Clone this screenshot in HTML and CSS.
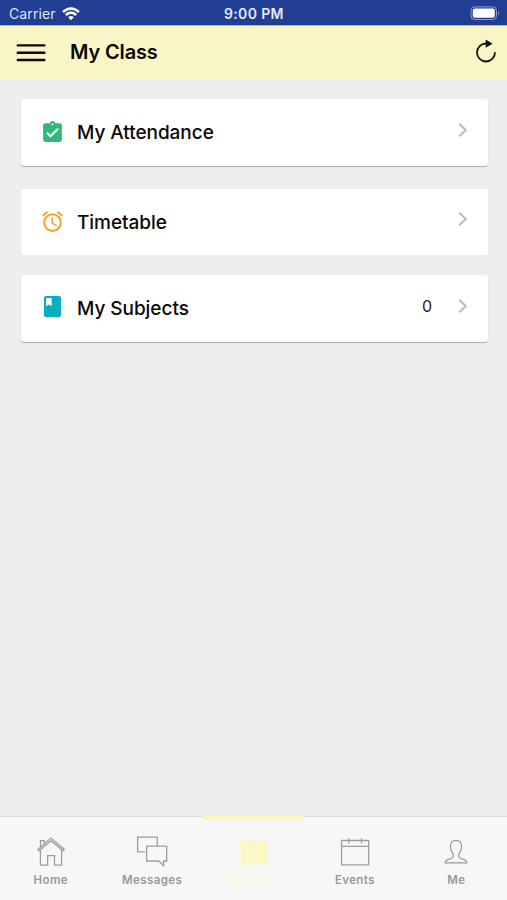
FILE: index.html
```html
<!DOCTYPE html>
<html lang="en">
<head>
<meta charset="utf-8">
<title>My Class</title>
<link rel="stylesheet" href="styles.css">
</head>
<body>
<div class="status">
  <span class="carrier">Carrier</span>
  <svg class="wifi" width="18" height="14" viewBox="0 0 18 14" fill="none" stroke="#fff" stroke-width="2.5"><path d="M1 5Q9-2 17 5M3.8 8Q9 3.3 14.2 8"/><path d="M6.2 10.2Q9 7.8 11.8 10.2L9 13.2Z" fill="#fff" stroke="none"/></svg>
  <span class="time">9:00 PM</span>
  <svg class="battery" width="31" height="15" viewBox="0 0 31 15"><rect x="1" y=".9" width="25.5" height="12.6" rx="3.6" fill="none" stroke="#8f9dcd"/><rect x="2.8" y="2.6" width="22" height="9.2" rx="2" fill="#fff"/><path d="M28 5q2 2.2 0 4.4z" fill="#8f9dcd"/></svg>
</div>
<header class="header">
  <svg class="menu" width="30" height="20" viewBox="0 0 30 20" stroke="#0c0b08" stroke-width="2.4" stroke-linecap="round"><path d="M1.8 2.4h26.6M1.8 9.7h26.6M1.8 17h26.6"/></svg>
  <h1>My Class</h1>
  <svg class="refresh" width="22" height="24" viewBox="0 0 22 24" fill="none" stroke="#15140f" stroke-width="1.8"><path d="M11.2 4.5A9 9 0 1 0 20 13.2"/><path d="M10.7.5l6.8 4.2-6.8 4.1z" fill="#0c0b08" stroke="none"/></svg>
</header>
<main class="list">
  <section class="card raised">
    <svg class="icon" width="24" height="24" viewBox="0 0 24 24" fill="#2fb87b"><path fill-rule="evenodd" d="M19 3h-4.2a3 3 0 0 0-5.6 0H5a2 2 0 0 0-2 2v14a2 2 0 0 0 2 2h14a2 2 0 0 0 2-2V5a2 2 0 0 0-2-2zm-7 0a1 1 0 1 1 0 2 1 1 0 0 1 0-2zm-2 14l-4-4 1.4-1.4L10 14.2l6.6-6.6L18 9z"/></svg>
    <span class="label">My Attendance</span>
    <svg class="chevron" width="10" height="16" viewBox="0 0 10 16"><path d="M1.3 1.7L7.7 8l-6.4 6.3"/></svg>
  </section>
  <section class="card">
    <svg class="icon" width="24" height="24" viewBox="0 0 24 24" fill="#f8a32b"><path d="M22 5.7l-4.6-3.9-1.3 1.5 4.6 3.9zM7.9 3.4L6.6 1.9 2 5.7l1.3 1.5zM12.5 8H11v6l4.7 2.9.8-1.3-4-2.3zM12 4a9 9 0 1 0 0 18 9 9 0 0 0 0-18zm0 16a7 7 0 1 1 0-14 7 7 0 0 1 0 14z"/></svg>
    <span class="label timetable">Timetable</span>
    <svg class="chevron" width="10" height="16" viewBox="0 0 10 16"><path d="M1.3 1.7L7.7 8l-6.4 6.3"/></svg>
  </section>
  <section class="card raised">
    <svg class="icon book" width="24" height="24" viewBox="0 0 24 24" fill="#06adc3"><path fill-rule="evenodd" d="M18.2 1.8H5.8a2 2 0 0 0-2 2v16.4a2 2 0 0 0 2 2h12.4a2 2 0 0 0 2-2V3.8a2 2 0 0 0-2-2zM5.8 3.8h5.4v8l-2.7-1.7-2.7 1.7z"/></svg>
    <span class="label">My Subjects</span>
    <span class="count">0</span>
    <svg class="chevron" width="10" height="16" viewBox="0 0 10 16"><path d="M1.3 1.7L7.7 8l-6.4 6.3"/></svg>
  </section>
</main>
<nav class="tabs">
  <a class="tab">
    <svg width="34" height="34" viewBox="0 0 34 34"><path d="M3.8 15.4L17 4.1l13.2 11.3-1.2 1.4L17 6.7 5 16.8zM6.4 15.8v15.3h7.2V21.7h6.9v9.4h7.1V15.8M6.5 13V6.7h3.7v3.1"/></svg>
    <span>Home</span>
  </a>
  <a class="tab">
    <svg width="34" height="34" viewBox="0 0 34 34"><path d="M10.3 17.9H2.6V3.1h19.7v8.7M11.7 12.2h20V27h-3.1v4.6L23.9 27H11.7z"/></svg>
    <span>Messages</span>
  </a>
  <a class="tab active">
    <svg width="34" height="34" viewBox="0 0 34 34"><path d="M3.5 6q7-1 13 .3Q23 5 30.5 6v24.5l-4.4-2.4-4.3 2.4-5.3 1-4.3-3-4.4 2.4-4.3-1.4z"/><path class="spine" d="M16.7 6.5v24"/></svg>
    <span>My Class</span>
  </a>
  <a class="tab">
    <svg width="34" height="34" viewBox="0 0 34 34"><path d="M3.6 6.5h27.1v24.4H3.6zM3.6 12.4h27.1M10.8 4.2v5.2M23.5 4.2v5.2"/></svg>
    <span>Events</span>
  </a>
  <a class="tab">
    <svg width="34" height="34" viewBox="0 0 34 34"><path d="M17 6.3c-4 0-5.8 2.7-5.6 6.5.2 3.4 1.3 5.3 2.8 7.1.5 3.2-.5 4.2-3 5-3.4 1.1-4.7 1.5-5 4h21.6c-.3-2.5-1.6-2.9-5-4-2.5-.8-3.5-1.8-3-5 1.5-1.8 2.6-3.7 2.8-7.1.2-3.8-1.6-6.5-5.6-6.5z"/></svg>
    <span>Me</span>
  </a>
</nav>
</body>
</html>
```
FILE: styles.css
```css
* { box-sizing: border-box; }
body {
  margin: 0;
  height: 900px;
  display: flex;
  flex-direction: column;
  background: #eee;
  color: #080808;
  font-family: Inter, sans-serif;
  overflow: hidden;
}
svg { display: block; flex: none; }
.status {
  height: 25px;
  display: grid;
  grid-template-columns: 62px 153px 1fr 31px;
  align-items: center;
  padding: 2px 6px 0 9px;
  background: #223d94;
  color: #fff;
  font-size: 14px;
  line-height: 23px;
}
.carrier { color: #dfe4f5; letter-spacing: .1px; }
.wifi { margin-left: -9px; }
.time {
  font-size: 14px;
  font-weight: 600;
  letter-spacing: .35px;
  color: #e6eafa;
}
.header {
  height: 55px;
  display: flex;
  align-items: center;
  padding: 0 10px 0 16px;
  background: #faf5c4;
  border-top: 1px solid #b4b8b1;
}
h1 {
  margin: -2px 0 0 24px;
  font-size: 20px;
  line-height: 26px;
  font-weight: 600;
  letter-spacing: -.15px;
}
.refresh { margin: -4px 0 0 auto; }
.list {
  flex: 1;
  padding: 19px 19px 0 20.5px;
}
.card {
  height: 66px;
  display: flex;
  align-items: center;
  background: #fff;
  border-radius: 3px;
  padding: 0 20px 0 19.5px;
  margin-bottom: 20px;
}
.raised {
  height: 67px;
  box-shadow: 0 1px 1px #aaa;
  margin-bottom: 23px;
}
.icon { width: 25px; height: 25px; margin-top: -1px; }
.book { margin-top: -4px; }
.label {
  margin-left: 12px;
  font-size: 19px;
  line-height: 24px;
  font-weight: 500;
  letter-spacing: -.05px;
}
.timetable { margin-top: 2px; }
.chevron {
  margin: -6px 0 0 auto;
  fill: none;
  stroke: #bcbcbc;
  stroke-width: 2;
}
.count {
  margin: -6px 0 0 auto;
  font-size: 16px;
  color: #222;
}
.count + .chevron { margin-left: 26px; }
.tabs {
  height: 84px;
  display: grid;
  grid-template-columns: repeat(5, 1fr);
  border-top: 1px solid #dfdfdf;
  background: #f7f7f7;
}
.tab {
  display: flex;
  flex-direction: column;
  align-items: center;
  padding-top: 17px;
  color: #999;
  font-size: 11.5px;
  line-height: 16px;
  font-weight: 600;
  letter-spacing: .4px;
}
.tab svg { fill: none; stroke: #9e9e9e; stroke-width: 1.3; }
.tab span { margin-top: 4px; }
.active {
  border-top: 3px solid #fcf6b9;
  margin-top: -1px;
  padding-top: 16px;
  color: #faf7d5;
}
.active svg { fill: #fbf8c4; stroke: none; margin-left: 1px; }
.active .spine { stroke: #f8f5dc; stroke-width: 2; }
```
